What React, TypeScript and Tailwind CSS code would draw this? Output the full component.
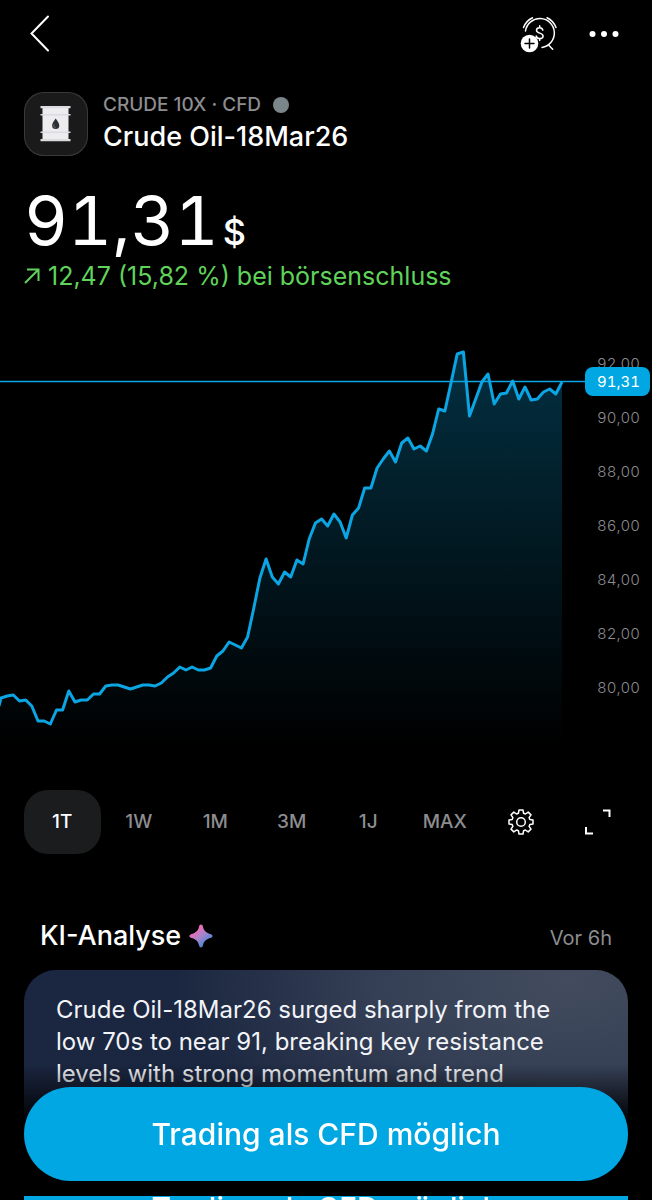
import { useState } from 'react';

const accent = '#0aa5e2';

const ranges = ['1T', '1W', '1M', '3M', '1J', 'MAX'];

const axisLabels = ['92,00', '90,00', '88,00', '86,00', '84,00', '82,00', '80,00'];

// Line heights inside the plot, one per interval
const series = [
  363, 361, 360, 366, 365, 371, 386, 386, 389, 375, 375, 356, 367, 365, 365, 359, 359, 351, 350, 350,
  352, 354, 352, 350, 350, 351, 348, 342, 338, 332, 335, 332, 335, 335, 333, 321, 316, 307, 310, 313,
  302, 273, 243, 224, 242, 249, 237, 242, 225, 229, 204, 188, 184, 191, 179, 187, 203, 180, 173, 153,
  153, 133, 124, 116, 127, 108, 103, 114, 111, 116, 99, 74, 76, 48, 19, 17, 81, 64, 47, 39, 69, 59,
  58, 46, 64, 52, 65, 64, 57, 54, 59, 47,
];

const startX = 1;
const endX = 562;
const step = (endX - startX) / (series.length - 1);
const linePoints = series.map((y, i) => `${(startX + i * step).toFixed(1)},${y}`).join(' ');

function BarrelIcon() {
  return (
    <svg viewBox="0 0 64 64" className="w-16 h-16" aria-hidden="true">
      <rect x="18.5" y="15" width="26" height="34" fill="#ededf0" />
      <path d="M16.5 14h30v2.2h-30zM16.5 22h30v1.6h-30zM16.5 39.5h30v1.6h-30zM16.5 47h30v2.2h-30z" fill="#dcdce0" />
      <path d="M31.7 26.500c1.600 2.600 3.600 4.600 3.600 6.900a3.600 3.600 0 0 1-7.200 0c0-2.300 2-4.300 3.600-6.900z" fill="#2d3035" />
      <path d="M30 32.500c-.6 1.600.2 3.200 1.700 3.400" fill="none" stroke="#7c8086" strokeWidth="0.8" />
    </svg>
  );
}

function AlarmIcon() {
  return (
    <svg viewBox="0 0 40 40" className="w-10 h-10" fill="none" stroke="white" strokeWidth="1.5" strokeLinecap="round" aria-hidden="true">
      <path d="M5.5 17A14.5 14.5 0 1 1 22 33.4" />
      <path d="M28.5 31l4.2 4.3" />
      <path d="M3.5 13.5A17.5 17.5 0 0 1 12.500 3.700" />
      <path d="M27 3.700A17.500 17.500 0 0 1 36 13.500" />
      <path d="M22.800 16.200c-.3-1.600-1.500-2.500-3.200-2.500-1.900 0-3.100 1-3.100 2.600 0 3.700 6.600 1.900 6.600 5.600 0 1.700-1.400 2.700-3.400 2.700-1.900 0-3.200-.9-3.500-2.600M19.700 11.700v2M19.700 24.600v2" />
      <circle cx="9.5" cy="29.5" r="8.8" fill="white" stroke="none" />
      <path d="M9.5 25v9M5 29.5h9" stroke="black" />
    </svg>
  );
}

function GearIcon() {
  return (
    <svg viewBox="0 0 26 26" className="w-[26px] h-[26px]" fill="none" stroke="white" strokeWidth="1.5" strokeLinejoin="round" aria-hidden="true">
      <path d="M11 1h4l.6 3.300 1.800.7 2.800-1.900 2.800 2.800L21.100 8.600l.7 1.800 3.200.6v4l-3.200.6-.7 1.800 1.900 2.700-2.800 2.800-2.800-1.900-1.800.7L15 25h-4l-.6-3.300-1.800-.7-2.800 1.900L3 20.100l1.900-2.700-.7-1.800L1 15v-4l3.200-.6.7-1.800L3 5.900l2.800-2.800L8.600 5l1.800-.7z" />
      <circle cx="13" cy="13" r="4.3" />
    </svg>
  );
}

function SparkleIcon() {
  return (
    <svg viewBox="0 0 24 24" className="w-6 h-6" aria-hidden="true">
      <defs>
        <linearGradient id="sparkle" x1="0.25" y1="0.2" x2="0.75" y2="0.8">
          <stop offset="0" stopColor="#f56ab4" />
          <stop offset="0.5" stopColor="#a884c8" />
          <stop offset="1" stopColor="#4f86d8" />
        </linearGradient>
      </defs>
      <path
        d="M12 0.500c1 0 1.600.7 1.900 1.900 1 4.200 2.800 6 7.400 7.500 1.400.5 2.300 1.100 2.300 2.100s-.9 1.600-2.300 2.100c-4.600 1.500-6.400 3.300-7.400 7.500-.3 1.200-.9 1.900-1.900 1.900s-1.600-.7-1.900-1.900c-1-4.200-2.800-6-7.400-7.500C1.300 13.600.4 13 .4 12s.9-1.600 2.300-2.100c4.600-1.500 6.400-3.300 7.400-7.500.3-1.200.9-1.900 1.900-1.900z"
        fill="url(#sparkle)"
      />
    </svg>
  );
}

function PriceChart() {
  return (
    <section className="flex mt-[43px]" aria-label="Kursverlauf">
      <div className="grow min-w-0">
        <svg viewBox="0 0 585 420" preserveAspectRatio="none" className="block w-full h-[420px]" role="img">
          <defs>
            <linearGradient id="area" gradientUnits="userSpaceOnUse" x1="0" y1="17" x2="0" y2="410">
              <stop offset="0" stopColor={accent} stopOpacity="0.29" />
              <stop offset="1" stopColor={accent} stopOpacity="0" />
            </linearGradient>
          </defs>
          <polygon points={`0,371 ${linePoints} ${endX},410 0,410`} fill="url(#area)" />
          <path d="M0 46.5h585" stroke={accent} strokeWidth="1.5" />
          <polyline points={`-1,371 ${linePoints}`} fill="none" stroke={accent} strokeWidth="3" strokeLinejoin="round" />
        </svg>
      </div>
      <div className="relative w-[67px] shrink-0 text-[15px] font-light tabular-nums">
        <ul className="pt-[2px] text-[#8b8b8e]">
          {axisLabels.map(label => (
            <li key={label} className="h-[54px] pl-3 leading-[54px]">
              {label}
            </li>
          ))}
        </ul>
        <span className="absolute left-0 top-8 w-[65px] h-[29px] rounded-lg bg-[#00a7e3] pl-3 leading-[29px] text-white font-normal">
          91,31
        </span>
      </div>
    </section>
  );
}

export default function App() {
  const [range, setRange] = useState('1T');

  return (
    <div className="h-screen overflow-hidden bg-black text-white font-['Inter','Liberation_Sans',sans-serif]">
      {/* Top bar */}
      <header className="flex items-center justify-between h-[68px] px-6">
        <button aria-label="Zurück" className="w-8 h-10">
          <svg viewBox="0 0 32 40" className="w-8 h-10" fill="none" stroke="white" strokeWidth="2" strokeLinecap="round">
            <path d="M24 2.5L7.5 19.5L24 36.5" />
          </svg>
        </button>
        <div className="flex items-center gap-7 pr-2">
          <button aria-label="Preisalarm hinzufügen">
            <AlarmIcon />
          </button>
          <button aria-label="Mehr">
            <svg viewBox="0 0 32 8" className="w-8 h-2" fill="white">
              <circle cx="4.5" cy="4" r="3" />
              <circle cx="16" cy="4" r="3" />
              <circle cx="27.5" cy="4" r="3" />
            </svg>
          </button>
        </div>
      </header>

      {/* Instrument */}
      <section className="px-6 pt-6">
        <div className="flex items-center gap-[15px]">
          <div className="w-16 h-16 shrink-0 rounded-[20px] bg-[#1a1a1a] ring-1 ring-inset ring-[#3a3a3a]">
            <BarrelIcon />
          </div>
          <div>
            <p className="flex items-center gap-3 text-[19px] leading-[26px] font-medium text-[#8d8d90]">
              CRUDE 10X · CFD
              <span className="w-4 h-4 rounded-full bg-[#7b868b]" />
            </p>
            <h1 className="text-[27px] leading-[38px] font-medium">Crude Oil-18Mar26</h1>
          </div>
        </div>
        <p className="flex items-baseline gap-1 mt-6 text-[68px] leading-[80px] tabular-nums">
          91,31
          <span className="text-[36px] leading-none font-medium">$</span>
        </p>
        <p className="flex items-center gap-2 text-[25px] leading-8 text-[#5fd35a]">
          <svg viewBox="0 0 16 16" className="w-4 h-4" fill="none" stroke="currentColor" strokeWidth="2">
            <path d="M1 15L14.5 1.5M3 1.5h11.5V13" />
          </svg>
          12,47 (15,82 %) bei börsenschluss
        </p>
      </section>

      <PriceChart />

      {/* Range picker */}
      <nav className="grid grid-cols-8 h-16 mt-[35px] pl-6 pr-4">
        {ranges.map(item => (
          <button
            key={item}
            onClick={() => setRange(item)}
            className={`rounded-3xl text-[19px] font-medium ${
              item === range ? 'bg-[#1b1c1e] text-white' : 'text-[#8d8d90]'
            }`}
          >
            {item}
          </button>
        ))}
        <button aria-label="Einstellungen" className="flex items-center justify-center">
          <GearIcon />
        </button>
        <button aria-label="Vollbild" className="flex items-center justify-center">
          <svg viewBox="0 0 26 26" className="w-[26px] h-[26px]" fill="none" stroke="white" strokeWidth="2">
            <path d="M18 1.5h6.5V8M1 18v6.5h7" />
          </svg>
        </button>
      </nav>

      {/* AI analysis */}
      <section className="px-6 mt-16">
        <div className="flex items-center justify-between px-4 h-9">
          <h2 className="flex items-center gap-2 text-[27px] leading-9 font-medium">
            KI-Analyse
            <SparkleIcon />
          </h2>
          <span className="pt-1 text-xl text-[#8d8d90]">Vor 6h</span>
        </div>
        <div className="mt-4 h-[230px] rounded-t-[32px] bg-[radial-gradient(ellipse_65%_90%_at_90%_5%,#434c5e_0%,#343f55_50%,#1b2640_100%)] px-8 pt-6 text-2xl leading-8 text-[#f2f4f8]">
          <p>
            Crude Oil-18Mar26 surged sharply from the low 70s to near 91, breaking key resistance levels with
            strong momentum and trend
          </p>
        </div>
      </section>

      {/* Call to action */}
      <footer className="fixed inset-x-0 bottom-0 h-[145px] overflow-hidden bg-linear-to-b from-transparent from-[10px] to-black to-[70px] px-6 pt-8">
        <button className="block w-full h-[94px] rounded-full bg-[#00a7e3] text-[30px] font-medium">
          Trading als CFD möglich
        </button>
        <div className="flex justify-center h-10 mt-[15px] bg-[#00a7e3] text-[30px] leading-6 font-medium" aria-hidden="true">
          Trading als CFD möglich
        </div>
      </footer>
    </div>
  );
}
